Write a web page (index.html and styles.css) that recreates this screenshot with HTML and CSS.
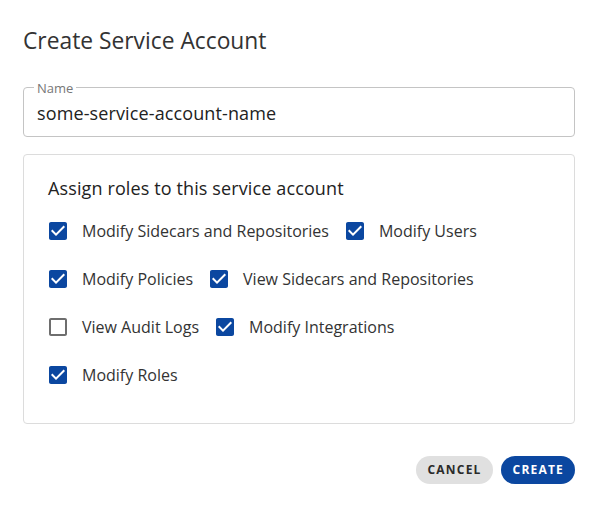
FILE: index.html
```
<!DOCTYPE html>
<html>
<head>
<meta charset="utf-8">
<link rel="stylesheet" href="styles.css">
</head>
<body>
<div class="dialog">
  <h1 class="title">Create Service Account</h1>
  <div class="field">
    <span class="field-label">Name</span>
    <div class="field-value">some-service-account-name</div>
  </div>
  <div class="roles">
    <div class="roles-head">Assign roles to this service account</div>
    <div class="row">
      <div class="item"><svg class="cb" viewBox="0 0 24 24"><path class="on" d="M19 3H5c-1.11 0-2 .9-2 2v14c0 1.1.89 2 2 2h14c1.11 0 2-.9 2-2V5c0-1.1-.89-2-2-2zm-9 14l-5-5 1.41-1.41L10 14.17l7.59-7.59L19 8l-9 9z"/></svg><span class="lbl">Modify Sidecars and Repositories</span></div>
      <div class="item"><svg class="cb" viewBox="0 0 24 24"><path class="on" d="M19 3H5c-1.11 0-2 .9-2 2v14c0 1.1.89 2 2 2h14c1.11 0 2-.9 2-2V5c0-1.1-.89-2-2-2zm-9 14l-5-5 1.41-1.41L10 14.17l7.59-7.59L19 8l-9 9z"/></svg><span class="lbl">Modify Users</span></div>
    </div>
    <div class="row">
      <div class="item"><svg class="cb" viewBox="0 0 24 24"><path class="on" d="M19 3H5c-1.11 0-2 .9-2 2v14c0 1.1.89 2 2 2h14c1.11 0 2-.9 2-2V5c0-1.1-.89-2-2-2zm-9 14l-5-5 1.41-1.41L10 14.17l7.59-7.59L19 8l-9 9z"/></svg><span class="lbl">Modify Policies</span></div>
      <div class="item"><svg class="cb" viewBox="0 0 24 24"><path class="on" d="M19 3H5c-1.11 0-2 .9-2 2v14c0 1.1.89 2 2 2h14c1.11 0 2-.9 2-2V5c0-1.1-.89-2-2-2zm-9 14l-5-5 1.41-1.41L10 14.17l7.59-7.59L19 8l-9 9z"/></svg><span class="lbl">View Sidecars and Repositories</span></div>
    </div>
    <div class="row">
      <div class="item"><svg class="cb" viewBox="0 0 24 24"><path class="off" d="M19 5v14H5V5h14m0-2H5c-1.1 0-2 .9-2 2v14c0 1.1.9 2 2 2h14c1.1 0 2-.9 2-2V5c0-1.1-.9-2-2-2z"/></svg><span class="lbl">View Audit Logs</span></div>
      <div class="item"><svg class="cb" viewBox="0 0 24 24"><path class="on" d="M19 3H5c-1.11 0-2 .9-2 2v14c0 1.1.89 2 2 2h14c1.11 0 2-.9 2-2V5c0-1.1-.89-2-2-2zm-9 14l-5-5 1.41-1.41L10 14.17l7.59-7.59L19 8l-9 9z"/></svg><span class="lbl">Modify Integrations</span></div>
    </div>
    <div class="row">
      <div class="item"><svg class="cb" viewBox="0 0 24 24"><path class="on" d="M19 3H5c-1.11 0-2 .9-2 2v14c0 1.1.89 2 2 2h14c1.11 0 2-.9 2-2V5c0-1.1-.89-2-2-2zm-9 14l-5-5 1.41-1.41L10 14.17l7.59-7.59L19 8l-9 9z"/></svg><span class="lbl">Modify Roles</span></div>
    </div>
  </div>
  <div class="actions">
    <button class="btn btn-cancel">Cancel</button>
    <button class="btn btn-create">Create</button>
  </div>
</div>
</body>
</html>
```
FILE: styles.css
```
html, body {
  margin: 0;
  padding: 0;
  background: #fff;
}
body {
  font-family: "Open Sans", "Noto Sans", sans-serif;
  color: #333;
}
.dialog {
  padding: 25px 23px 0 23px;
}
.title {
  margin: 0;
  font-size: 22.8px;
  line-height: 32px;
  font-weight: 400;
  color: #333;
}
.field {
  position: relative;
  margin-top: 30px;
  border: 1px solid #c4c4c4;
  border-radius: 4px;
  padding: 13px 13px 11px 13px;
}
.field-label {
  position: absolute;
  left: 10px;
  top: -8px;
  padding: 0 3px;
  background: #fff;
  font-size: 13px;
  line-height: 16px;
  color: #777;
}
.field-value {
  font-size: 18px;
  line-height: 24px;
  letter-spacing: 0.12px;
  color: #222;
}
.roles {
  margin-top: 17px;
  border: 1px solid #dcdcdc;
  border-radius: 4px;
  padding: 21px 24px 24px 24px;
}
.roles-head {
  font-size: 18px;
  line-height: 24px;
  letter-spacing: 0.12px;
  color: #222;
  margin-bottom: 7px;
}
.row {
  display: flex;
  align-items: center;
  height: 48px;
}
.item {
  display: flex;
  align-items: center;
  margin-right: 16px;
}
.cb {
  width: 24px;
  height: 24px;
  margin-left: -2px;
  margin-right: 12px;
  flex: none;
}
.on { fill: #0b47a0; }
.off { fill: #6e6e6e; }
.lbl {
  font-size: 16px;
  line-height: 24px;
  color: #333;
}
.actions {
  display: flex;
  justify-content: flex-end;
  gap: 8px;
  margin-top: 32px;
}
.btn {
  font-family: "Open Sans", "Noto Sans", sans-serif;
  border: none;
  border-radius: 14px;
  height: 28px;
  padding: 0 11px 0 12px;
  font-size: 12px;
  font-weight: 700;
  letter-spacing: 1.2px;
  text-transform: uppercase;
  line-height: 28px;
}
.btn-cancel {
  background: #e0e0e0;
  color: #2a2a2a;
}
.btn-create {
  background: #0b47a0;
  color: #fff;
}
```
